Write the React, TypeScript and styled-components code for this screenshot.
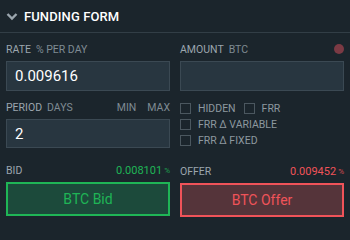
import React from "react";
import styled, { createGlobalStyle } from "styled-components";

const GlobalStyle = createGlobalStyle`
  html, body {
    margin: 0;
    padding: 0;
    background: #1b252c;
    font-family: Roboto, "Liberation Sans", sans-serif;
  }
`;

const Panel = styled.div`
  width: 350px;
  height: 227px;
  background: #1b252c;
  box-sizing: border-box;
`;

const Header = styled.div`
  height: 32px;
  display: flex;
  align-items: center;
  gap: 6px;
  padding-left: 6px;
  border-bottom: 1px solid #323e46;
  color: #ffffff;
  font-size: 13px;
  font-weight: 500;
  letter-spacing: 0.1px;
`;

const Body = styled.div`
  display: grid;
  grid-template-columns: 164px 164px;
  column-gap: 10px;
  padding: 9px 6px 0 6px;
`;

const Column = styled.div`
  display: flex;
  flex-direction: column;
`;

const LabelRow = styled.div<{ $mt?: number }>`
  height: 14px;
  display: flex;
  align-items: center;
  margin-top: ${(p) => p.$mt ?? 0}px;
  margin-bottom: 5px;
  font-size: 10.5px;
  color: #9ba6ae;
`;

const Unit = styled.span<{ $ml?: number }>`
  margin-left: ${(p) => p.$ml ?? 5}px;
  color: #7f8b93;
`;

const Spacer = styled.span`
  flex: 1;
`;

const Value = styled.span<{ $color: string }>`
  color: ${(p) => p.$color};
  font-size: 11px;
`;

const Percent = styled.span<{ $color: string }>`
  color: ${(p) => p.$color};
  font-size: 8px;
  margin-left: 2px;
  opacity: 0.85;
`;

const Dot = styled.span`
  width: 10px;
  height: 10px;
  border-radius: 50%;
  background: #7b3a44;
`;

const Input = styled.div<{ $h: number }>`
  height: ${(p) => p.$h}px;
  box-sizing: border-box;
  background: #283640;
  border: 1px solid #3b4953;
  display: flex;
  align-items: center;
  padding-left: 8px;
  color: #ffffff;
  font-size: 15px;
`;

const Checks = styled.div`
  display: flex;
  flex-direction: column;
  gap: 5px;
  margin-top: 12px;
`;

const CheckRow = styled.div`
  display: flex;
  align-items: center;
  height: 11px;
`;

const Check = styled.label`
  display: flex;
  align-items: center;
  gap: 7px;
  margin-right: 8px;
  font-size: 10.5px;
  color: #8d989f;
`;

const Box = styled.span`
  width: 11px;
  height: 11px;
  box-sizing: border-box;
  border: 1px solid #4b575f;
`;

const Button = styled.div<{ $fg: string; $bg: string }>`
  height: 34px;
  box-sizing: border-box;
  border: 2px solid ${(p) => p.$fg};
  background: ${(p) => p.$bg};
  color: ${(p) => p.$fg};
  display: flex;
  align-items: center;
  justify-content: center;
  font-size: 14px;
`;

const GREEN = "#1fb556";
const RED = "#f05359";

const Chevron = () => (
  <svg width="12" height="9" viewBox="0 0 12 9">
    <path d="M1.5 2 L6 6.5 L10.5 2" fill="none" stroke="#9ba6ae" strokeWidth="2.4" />
  </svg>
);

export default function App() {
  return (
    <Panel>
      <GlobalStyle />
      <Header>
        <Chevron />
        FUNDING FORM
      </Header>
      <Body>
        <Column>
          <LabelRow>
            RATE<Unit>% PER DAY</Unit>
          </LabelRow>
          <Input $h={30}>0.009616</Input>
          <LabelRow $mt={9}>
            PERIOD<Unit>DAYS</Unit>
            <Spacer />
            <Unit>MIN</Unit>
            <Unit $ml={11}>MAX</Unit>
          </LabelRow>
          <Input $h={29}>2</Input>
          <LabelRow $mt={15}>
            BID
            <Spacer />
            <Value $color={GREEN}>0.008101</Value>
            <Percent $color={GREEN}>%</Percent>
          </LabelRow>
          <Button $fg={GREEN} $bg="#1c4a3b">
            BTC Bid
          </Button>
        </Column>
        <Column>
          <LabelRow>
            AMOUNT<Unit>BTC</Unit>
            <Spacer />
            <Dot />
          </LabelRow>
          <Input $h={30} />
          <Checks>
            <CheckRow>
              <Check>
                <Box />
                HIDDEN
              </Check>
              <Check>
                <Box />
                FRR
              </Check>
            </CheckRow>
            <CheckRow>
              <Check>
                <Box />
                FRR Δ VARIABLE
              </Check>
            </CheckRow>
            <CheckRow>
              <Check>
                <Box />
                FRR Δ FIXED
              </Check>
            </CheckRow>
          </Checks>
          <LabelRow $mt={18}>
            OFFER
            <Spacer />
            <Value $color={RED}>0.009452</Value>
            <Percent $color={RED}>%</Percent>
          </LabelRow>
          <Button $fg={RED} $bg="#55343a">
            BTC Offer
          </Button>
        </Column>
      </Body>
    </Panel>
  );
}
